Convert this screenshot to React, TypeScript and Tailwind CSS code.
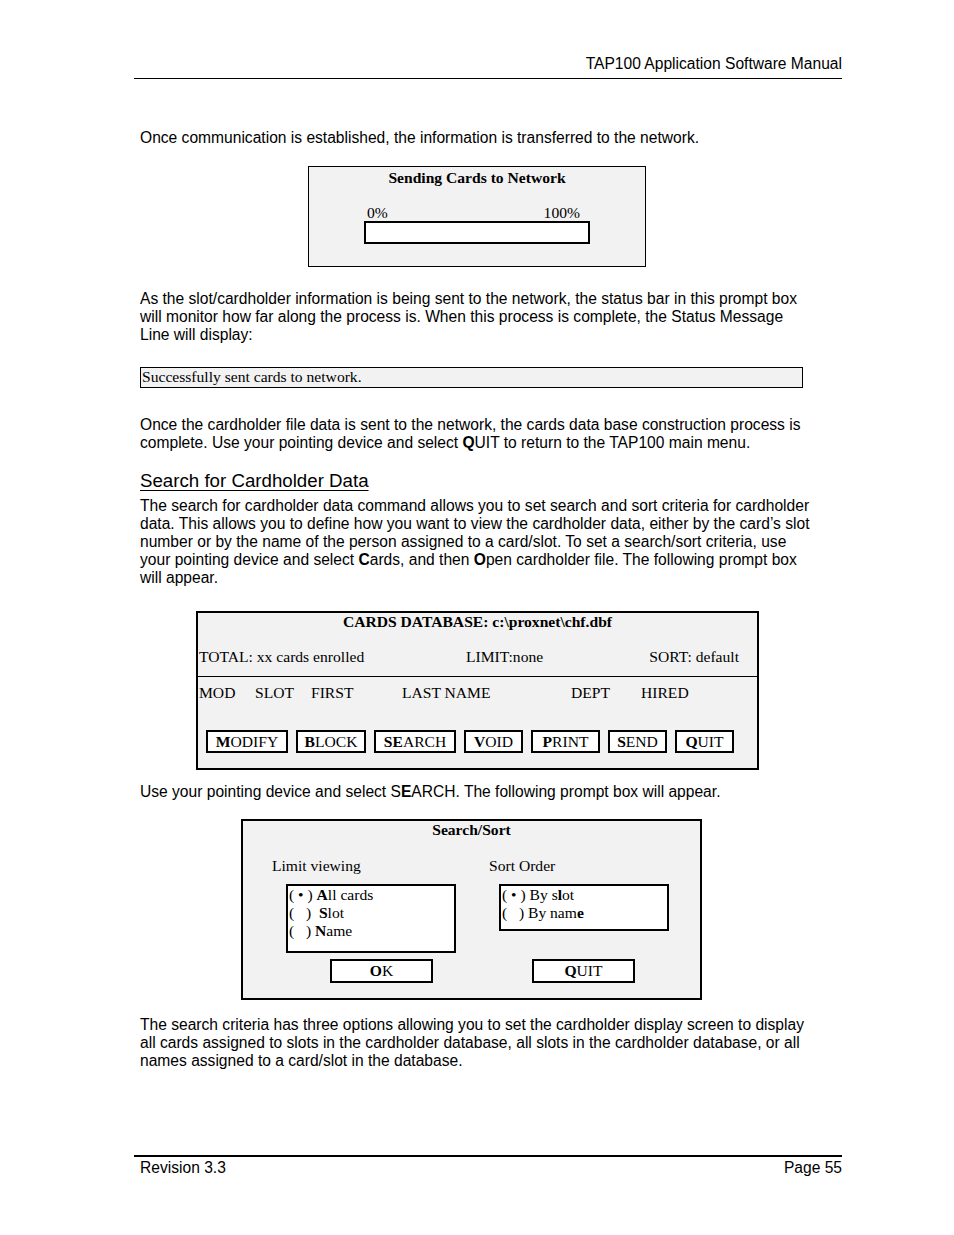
const sans = "font-['Liberation_Sans',Arial,sans-serif]";
const serif = "font-['Liberation_Serif','Times_New_Roman',serif]";

function Btn({ w, bold, rest }: { w: string; bold: string; rest: string }) {
  return (
    <div className={`${w} h-[23px] border-2 border-black bg-white flex items-center justify-center leading-[18px]`}>
      <span className="font-normal">
        <b>{bold}</b>
        {rest}
      </span>
    </div>
  );
}

export default function App() {
  return (
    <div className={`w-[954px] h-[1235px] bg-white text-black text-[15.6px] ${sans} overflow-hidden`}>
      {/* running header */}
      <div className="ml-[134px] w-[708px] pt-[55px]">
        <div className="text-right leading-[18px]">TAP100 Application Software Manual</div>
        <div className="mt-[5px] border-t border-black" />
      </div>

      <p className="ml-[140px] mt-[50px] leading-[18px]">
        Once communication is established, the information is transferred to the network.
      </p>

      {/* progress prompt */}
      <div className={`ml-[308px] mt-[19px] w-[338px] h-[101px] border border-black bg-[#f2f2f2] ${serif}`}>
        <div className="pt-[2px] text-center font-bold leading-[18px]">Sending Cards to Network</div>
        <div className="ml-[55px] w-[226px] mt-[18px]">
          <div className="flex justify-between pl-[3px] pr-[10px] leading-[16px]">
            <span>0%</span>
            <span>100%</span>
          </div>
          <div className="h-[23px] border-2 border-black bg-white" />
        </div>
      </div>

      <p className="ml-[140px] mt-[23px] leading-[18px] whitespace-nowrap">
        As the slot/cardholder information is being sent to the network, the status bar in this prompt box
        <br />
        will monitor how far along the process is. When this process is complete, the Status Message
        <br />
        Line will display:
      </p>

      <div className={`ml-[140px] mt-[23px] w-[663px] h-[21px] border border-black bg-[#f2f2f2] pl-[1px] leading-[18px] ${serif}`}>
        Successfully sent cards to network.
      </div>

      <p className="ml-[140px] mt-[28px] leading-[18px] whitespace-nowrap">
        Once the cardholder file data is sent to the network, the cards data base construction process is
        <br />
        complete. Use your pointing device and select <b>Q</b>UIT to return to the TAP100 main menu.
      </p>

      <h2 className="ml-[140px] mt-[18px] text-[18.7px] leading-[22px] underline underline-offset-[3px] decoration-1">
        Search for Cardholder Data
      </h2>

      <p className="ml-[140px] mt-[5px] leading-[18px] whitespace-nowrap">
        The search for cardholder data command allows you to set search and sort criteria for cardholder
        <br />
        data. This allows you to define how you want to view the cardholder data, either by the card’s slot
        <br />
        number or by the name of the person assigned to a card/slot. To set a search/sort criteria, use
        <br />
        your pointing device and select <b>C</b>ards, and then <b>O</b>pen cardholder file. The following prompt box
        <br />
        will appear.
      </p>

      {/* cards database prompt */}
      <div className={`ml-[196px] mt-[24px] w-[563px] h-[159px] border-2 border-black bg-[#f2f2f2] leading-[18px] ${serif}`}>
        <div className="text-center font-bold">{"CARDS DATABASE: c:\\proxnet\\chf.dbf"}</div>
        <div className="mt-[17px] flex pl-[1px] pr-[18px]">
          <span className="w-[267px]">TOTAL: xx cards enrolled</span>
          <span>LIMIT:none</span>
          <span className="ml-auto">SORT: default</span>
        </div>
        <div className="mt-[10px] border-t border-black" />
        <div className="mt-[7px] flex pl-[1px]">
          <span className="w-[56px]">MOD</span>
          <span className="w-[56px]">SLOT</span>
          <span className="w-[91px]">FIRST</span>
          <span className="w-[169px]">LAST NAME</span>
          <span className="w-[70px]">DEPT</span>
          <span>HIRED</span>
        </div>
        <div className="mt-[28px] ml-[8px] flex gap-[8px]">
          <Btn w="w-[82px]" bold="M" rest="ODIFY" />
          <Btn w="w-[70px]" bold="B" rest="LOCK" />
          <Btn w="w-[82px]" bold="SE" rest="ARCH" />
          <Btn w="w-[59px]" bold="V" rest="OID" />
          <Btn w="w-[69px]" bold="P" rest="RINT" />
          <Btn w="w-[59px]" bold="S" rest="END" />
          <Btn w="w-[59px]" bold="Q" rest="UIT" />
        </div>
      </div>

      <p className="ml-[140px] mt-[13px] leading-[18px]">
        Use your pointing device and select S<b>E</b>ARCH. The following prompt box will appear.
      </p>

      {/* search/sort prompt */}
      <div className={`ml-[241px] mt-[18px] w-[461px] h-[181px] border-2 border-black bg-[#f2f2f2] leading-[18px] ${serif}`}>
        <div className="text-center font-bold">Search/Sort</div>
        <div className="mt-[18px] flex">
          <span className="ml-[29px] w-[217px]">Limit viewing</span>
          <span>Sort Order</span>
        </div>
        <div className="mt-[9px] flex items-start">
          <div className="ml-[43px] w-[170px] h-[69px] border-2 border-black bg-white pl-[1px] whitespace-pre">
            <div>( • ) <b>A</b>ll cards</div>
            <div>(   )  <b>S</b>lot</div>
            <div>(   ) <b>N</b>ame</div>
          </div>
          <div className="ml-[43px] w-[170px] h-[47px] border-2 border-black bg-white pl-[1px] whitespace-pre">
            <div>( • ) By s<b>l</b>ot</div>
            <div>(   ) By nam<b>e</b></div>
          </div>
        </div>
        <div className="mt-[6px] flex">
          <div className="ml-[87px] w-[103px] h-[24px] border-2 border-black bg-white flex items-center justify-center">
            <span>
              <b>O</b>K
            </span>
          </div>
          <div className="ml-[99px] w-[103px] h-[24px] border-2 border-black bg-white flex items-center justify-center">
            <span>
              <b>Q</b>UIT
            </span>
          </div>
        </div>
      </div>

      <p className="ml-[140px] mt-[16px] leading-[18px] whitespace-nowrap">
        The search criteria has three options allowing you to set the cardholder display screen to display
        <br />
        all cards assigned to slots in the cardholder database, all slots in the cardholder database, or all
        <br />
        names assigned to a card/slot in the database.
      </p>

      {/* running footer */}
      <div className="ml-[134px] w-[708px] mt-[85px]">
        <div className="border-t-2 border-black" />
        <div className="mt-[2px] flex justify-between leading-[18px]">
          <span className="pl-[6px]">Revision 3.3</span>
          <span>Page 55</span>
        </div>
      </div>
    </div>
  );
}
